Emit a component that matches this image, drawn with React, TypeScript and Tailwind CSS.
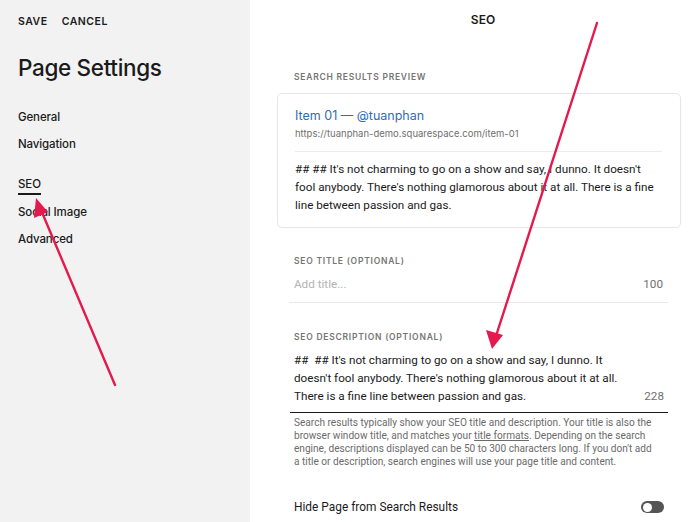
const navItems = ["General", "Navigation", "SEO", "Social Image", "Advanced"];

const body = "font-['Roboto',_'Liberation_Sans',_sans-serif]";

const Sidebar = () => (
  <aside className="w-[250px] shrink-0 bg-[#f2f2f2] px-[18px] text-[#1a1a1a]">
    <div className="flex gap-[14px] pt-[14px] text-[10.5px] font-semibold tracking-[0.05em]">
      <span>SAVE</span>
      <span>CANCEL</span>
    </div>
    <h1 className="mt-[23px] text-[22.5px] font-medium leading-[30px] tracking-[-0.015em]">
      Page Settings
    </h1>
    <nav className="mt-[21px] text-[11.5px] font-medium tracking-[-0.01em]">
      {navItems.map((item) => (
        <div
          key={item}
          className={
            item === "SEO" ? "mt-[13px] h-[28px] leading-[27px]" : "h-[27px] leading-[27px]"
          }
        >
          {item === "SEO" ? (
            <span className="relative inline-block after:absolute after:left-0 after:right-0 after:top-[22px] after:h-[2px] after:bg-[#1a1a1a]">
              SEO
            </span>
          ) : (
            item
          )}
        </div>
      ))}
    </nav>
  </aside>
);

const Label = ({ children }: { children: string }) => (
  <div className="pl-[17px] text-[8.5px] font-semibold tracking-[0.09em] text-[#757575]">
    {children}
  </div>
);

const Main = () => (
  <main className="flex-1 bg-white pl-[27px] pr-[19px] text-[#1a1a1a]">
    <div className="pl-[8px] pt-[13px] text-center text-[12px] font-semibold leading-[14px]">
      SEO
    </div>

    <div className="mt-[44px]">
      <Label>SEARCH RESULTS PREVIEW</Label>
    </div>

    {/* search result preview card */}
    <div className="mt-[9px] rounded-[5px] border border-[#e6e6e6] px-[17px] pb-[13px] pt-[13px]">
      <div className="text-[12.5px] leading-[18px] text-[#2f6db5]">Item 01 — @tuanphan</div>
      <div className="text-[9.5px] leading-[18px] text-[#6f6f6f]">
        https://tuanphan-demo.squarespace.com/item-01
      </div>
      <div className="mr-[1px] mt-[8px] border-t border-[#ececec]" />
      <p className={`mt-[8px] text-[11.7px] leading-[18px] ${body}`}>
        ## ## It's not charming to go on a show and say, I dunno. It doesn't fool anybody.
        There's nothing glamorous about it at all. There is a fine line between passion and
        gas.
      </p>
    </div>

    <div className="mt-[27px]">
      <Label>SEO TITLE (OPTIONAL)</Label>
    </div>
    <div
      className={`ml-[12px] mr-[13px] mt-[8px] flex items-center justify-between border-b border-[#e9e9e9] px-[5px] pb-[10px] text-[11.7px] leading-[16px] ${body}`}
    >
      <span className="text-[#b3b3b3]">Add title...</span>
      <span className="text-[#6f6f6f]">100</span>
    </div>

    <div className="mt-[28px]">
      <Label>SEO DESCRIPTION (OPTIONAL)</Label>
    </div>
    <div
      className={`ml-[13px] mr-[13px] mt-[8px] flex items-end justify-between border-b border-[#1a1a1a] px-[4px] pb-[7px] text-[11.7px] leading-[18px] ${body}`}
    >
      <p className="w-[340px]">
        ## &nbsp;## It's not charming to go on a show and say, I dunno. It doesn't fool
        anybody. There's nothing glamorous about it at all. There is a fine line between
        passion and gas.
      </p>
      <span className="text-[#6f6f6f]">228</span>
    </div>
    <p
      className={`ml-[17px] mr-[10px] mt-[3px] whitespace-nowrap text-[10.1px] leading-[13px] text-[#6b6b6b] ${body}`}
    >
      Search results typically show your SEO title and description. Your title is also the
      <br />
      browser window title, and matches your <span className="underline">title formats</span>.
      Depending on the search
      <br />
      engine, descriptions displayed can be 50 to 300 characters long. If you don't add
      <br />a title or description, search engines will use your page title and content.
    </p>

    <div
      className={`ml-[17px] mr-[17px] mt-[30px] flex items-center justify-between text-[11.9px] leading-[18px] ${body}`}
    >
      <span>Hide Page from Search Results</span>
      {/* toggle, off */}
      <div className="flex h-[12px] w-[23px] items-center rounded-full bg-[#555] px-[1.5px]">
        <div className="h-[9px] w-[9px] rounded-full bg-white" />
      </div>
    </div>
  </main>
);

const Arrows = () => (
  <svg className="pointer-events-none absolute inset-0" width="700" height="522" viewBox="0 0 700 522">
    <g stroke="#e5194b" strokeWidth="2.4" strokeLinecap="round" fill="none">
      <line x1="115" y1="385" x2="41" y2="210" />
      <line x1="597" y1="23" x2="496" y2="336" />
    </g>
    <g fill="#e5194b">
      <polygon points="36,198 34,218 48,212" />
      <polygon points="492,349 486,330 503,335" />
    </g>
  </svg>
);

export default function App() {
  return (
    <div
      className="relative flex h-[522px] w-[700px] overflow-hidden"
      style={{ fontFamily: "Inter, 'Liberation Sans', sans-serif" }}
    >
      <Sidebar />
      <Main />
      <Arrows />
    </div>
  );
}
